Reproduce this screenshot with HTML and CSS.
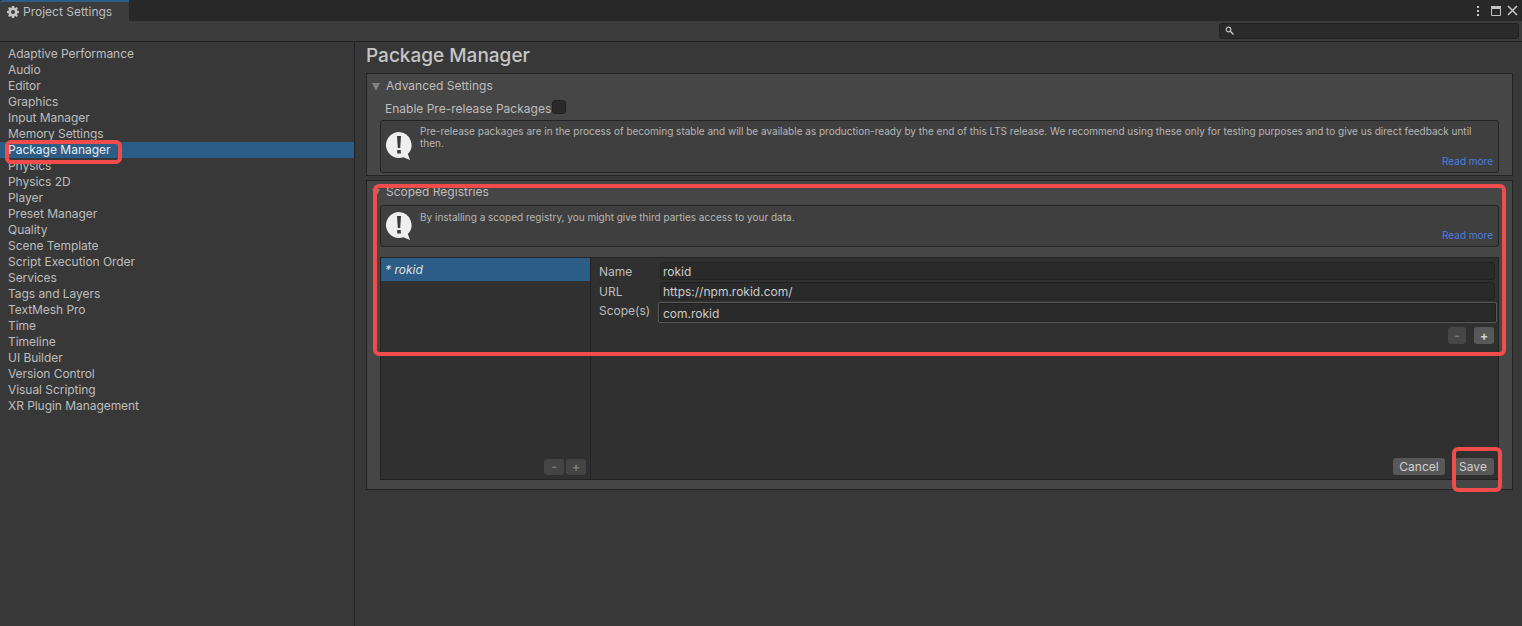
FILE: index.html
```html
<!DOCTYPE html>
<html lang="en">
<head>
<meta charset="utf-8">
<title>Project Settings</title>
<link rel="stylesheet" href="styles.css">
</head>
<body>
<div class="window">
  <header class="tabbar">
    <div class="tab">
      <svg class="gear" viewBox="0 0 12 12" width="12" height="12"><path fill="#c4c4c4" fill-rule="evenodd" d="M5 0h2l.3 1.6 1 .4L9.7 1.1l1.2 1.2L10 3.700l.4 1L12 5v2l-1.600.3-.4 1 .9 1.400-1.200 1.200-1.400-.9-1 .4L7 12H5l-.3-1.600-1-.4-1.400.9-1.200-1.200.9-1.400-.4-1L0 7V5l1.600-.3.4-1-.9-1.400L2.300 1.100l1.400.9 1-.4zM6 4a2 2 0 100 4 2 2 0 000-4z"/></svg>
      <span>Project Settings</span>
    </div>
    <div class="winctl">
      <svg class="kebab" viewBox="0 0 4 12" width="4" height="12"><path fill="#c4c4c4" d="M1 1h2v2H1zM1 5h2v2H1zM1 9h2v2H1z"/></svg>
      <svg viewBox="0 0 10 10" width="10" height="10"><path fill="none" stroke="#c4c4c4" d="M.5 2.500h9v7h-9z"/><path fill="#c4c4c4" d="M0 0h10v2.500H0z"/></svg>
      <svg viewBox="0 0 11 11" width="11" height="11"><path stroke="#c4c4c4" stroke-width="1.600" d="M1 1l9 9M10 1l-9 9"/></svg>
    </div>
  </header>
  <div class="toolbar">
    <div class="search">
      <svg viewBox="0 0 9 9" width="9" height="9"><circle cx="3.500" cy="3.500" r="2.300" fill="none" stroke="#c4c4c4" stroke-width="1.200"/><path stroke="#c4c4c4" stroke-width="1.400" d="M5.300 5.300L8.500 8.500"/></svg>
    </div>
  </div>
  <div class="content">
    <nav class="sidebar">
      <div class="nav-item">Adaptive Performance</div>
      <div class="nav-item">Audio</div>
      <div class="nav-item">Editor</div>
      <div class="nav-item">Graphics</div>
      <div class="nav-item">Input Manager</div>
      <div class="nav-item">Memory Settings</div>
      <div class="nav-item selected">Package Manager</div>
      <div class="nav-item">Physics</div>
      <div class="nav-item">Physics 2D</div>
      <div class="nav-item">Player</div>
      <div class="nav-item">Preset Manager</div>
      <div class="nav-item">Quality</div>
      <div class="nav-item">Scene Template</div>
      <div class="nav-item">Script Execution Order</div>
      <div class="nav-item">Services</div>
      <div class="nav-item">Tags and Layers</div>
      <div class="nav-item">TextMesh Pro</div>
      <div class="nav-item">Time</div>
      <div class="nav-item">Timeline</div>
      <div class="nav-item">UI Builder</div>
      <div class="nav-item">Version Control</div>
      <div class="nav-item">Visual Scripting</div>
      <div class="nav-item">XR Plugin Management</div>
    </nav>
    <main class="main">
      <h1 class="title">Package Manager</h1>
      <section class="panel panel-advanced">
        <div class="foldout"><i class="tri"></i><span>Advanced Settings</span></div>
        <div class="check-row"><span>Enable Pre-release Packages</span><i class="checkbox"></i></div>
        <div class="help help-tall">
          <svg class="warn" viewBox="0 0 28 30" width="28" height="30"><path fill="#efefef" d="M14 1a13 13 0 1 0 4.500 25.200L25 29l-2.200-6A13 13 0 0 0 14 1z"/><path fill="#3a3a3a" d="M12 5h4l-.8 12h-2.400zM12.200 19h3.600v3.600h-3.600z"/></svg>
          <p>Pre-release packages are in the process of becoming stable and will be available as production-ready by the end of this LTS release. We recommend using these only for testing purposes and to give us direct feedback until then.</p>
          <a class="more">Read more</a>
        </div>
      </section>
      <section class="panel panel-scoped">
        <div class="foldout foldout-scoped"><i class="tri"></i><span>Scoped Registries</span></div>
        <div class="help help-short">
          <svg class="warn" viewBox="0 0 28 30" width="28" height="30"><path fill="#efefef" d="M14 1a13 13 0 1 0 4.500 25.200L25 29l-2.200-6A13 13 0 0 0 14 1z"/><path fill="#3a3a3a" d="M12 5h4l-.8 12h-2.400zM12.200 19h3.600v3.600h-3.600z"/></svg>
          <p>By installing a scoped registry, you might give third parties access to your data.</p>
          <a class="more">Read more</a>
        </div>
        <div class="registry">
          <div class="reg-list">
            <div class="reg-item">* rokid</div>
            <div class="list-btns">
              <button class="btn mini dim">-</button>
              <button class="btn mini dim">+</button>
            </div>
          </div>
          <div class="reg-detail">
            <div class="field"><label>Name</label><div class="input">rokid</div></div>
            <div class="field"><label>URL</label><div class="input">https://npm.rokid.com/</div></div>
            <div class="field field-focus"><label>Scope(s)</label><div class="input focus">com.rokid</div></div>
            <div class="scope-btns">
              <button class="btn mini narrow dim">-</button>
              <button class="btn mini">+</button>
            </div>
            <div class="actions">
              <button class="btn action cancel">Cancel</button>
              <button class="btn action save">Save</button>
            </div>
          </div>
        </div>
      </section>
    </main>
  </div>
  <div class="mark mark-nav"></div>
  <div class="mark mark-reg"></div>
  <div class="mark mark-save"></div>
</div>
</body>
</html>
```
FILE: styles.css
```css
* { box-sizing: border-box; }
html, body { margin: 0; height: 100%; overflow: hidden; }
body { font-family: Inter, "Noto Sans", sans-serif; font-size: 12px; color: #bdbdbd; background: #383838; }
.window { position: relative; display: flex; flex-direction: column; width: 1522px; height: 626px; }

.tabbar { display: flex; justify-content: space-between; height: 21px; background: #282828; flex: none; }
.tab { display: flex; align-items: center; gap: 4px; width: 129px; padding-left: 7px; background: #3c3c3c; border-top: 2px solid #2c5d87; border-radius: 3px 0 0 0; }
.gear { flex: none; }
.winctl { display: flex; align-items: center; gap: 6px; padding: 0 4px 0 0; }
.kebab { margin-right: 5px; }

.toolbar { display: flex; justify-content: flex-end; align-items: center; height: 21px; padding: 0 3px 1px 0; background: #3c3c3c; border-bottom: 1px solid #232323; flex: none; }
.search { display: flex; align-items: center; width: 300px; height: 16px; padding-left: 5px; background: #2a2a2a; border: 1px solid #212121; border-radius: 3px; }

.content { display: flex; flex: 1; min-height: 0; }
.sidebar { width: 355px; padding-top: 4px; background: #383838; border-right: 1px solid #232323; flex: none; }
.nav-item { height: 16px; padding-left: 8px; line-height: 16px; letter-spacing: -0.05px; }
.nav-item.selected { background: #2c5d87; color: #ececec; letter-spacing: 0; }

.main { flex: 1; padding: 0 9px 0 11px; min-width: 0; }
.title { margin: 0; height: 31px; padding-top: 2px; font-size: 19px; line-height: 24px; font-weight: 500; color: #c6c6c6; }

.panel { background: #464646; border: 1px solid #232323; padding: 0 13px 0 13px; }
.panel-advanced { height: 103px; margin-bottom: 4px; }
.panel-scoped { height: 310px; }
.foldout { position: relative; display: flex; align-items: center; height: 23px; padding-left: 6px; font-size: 12px; }
.foldout-scoped { height: 24px; margin-top: -1px; }
.foldout-scoped span { margin-top: -2px; }
.tri { position: absolute; left: -8px; top: 9px; border-left: 4.500px solid transparent; border-right: 4.500px solid transparent; border-top: 8px solid #808080; }
.check-row { display: flex; align-items: center; height: 20px; padding: 2px 0 0 5px; font-size: 12px; }
.checkbox { width: 14px; height: 14px; margin: -2px 0 0 1px; background: #2a2a2a; border: 1px solid #212121; border-radius: 3px; }

.help { position: relative; background: #3f3f3f; border: 1px solid #232323; border-radius: 3px; padding: 5px 5px 0 39px; font-size: 10px; line-height: 12px; color: #b6b6b6; }
.help p { margin: 0; }
.help-tall { height: 53px; margin-top: 3px; padding-top: 4px; }
.help-short { height: 42px; margin-top: 1px; }
.warn { position: absolute; left: 4px; top: 10px; }
.help-short .warn { top: 5px; }
.more { position: absolute; right: 5px; bottom: 5px; color: #4c7ee0; }

.registry { display: flex; height: 223px; margin-top: 10px; background: #303030; border: 1px solid #232323; }
.reg-list { display: flex; flex-direction: column; width: 210px; border-right: 1px solid #232323; padding-bottom: 4px; flex: none; }
.reg-item { height: 23px; padding-left: 4px; line-height: 24px; background: #2c5d87; color: #e0e0e0; font-style: italic; font-size: 12px; }
.list-btns { display: flex; justify-content: flex-end; gap: 2px; margin-top: auto; padding-right: 4px; }
.reg-detail { display: flex; flex-direction: column; flex: 1; padding: 4px 3px 4px 8px; min-width: 0; }
.field { display: flex; align-items: center; height: 18px; margin-bottom: 2px; }
.field label { width: 61px; flex: none; }
.field-focus { height: 21px; margin: 0 -2px 0 0; align-items: flex-start; }
.field-focus label { width: 59px; padding-top: 1px; }
.input { flex: 1; height: 18px; padding-left: 2px; line-height: 17px; background: #2a2a2a; border: 1px solid #212121; border-radius: 3px; color: #cccccc; }
.input.focus { height: 21px; line-height: 21px; padding-left: 4px; border: 1px solid #585858; border-radius: 2px; box-shadow: inset 0 0 0 1px #212121; background: #2a2a2a; }
.scope-btns { display: flex; justify-content: flex-end; gap: 8px; margin-top: 4px; padding-right: 1px; }
.actions { display: flex; justify-content: flex-end; gap: 7px; margin-top: auto; padding-right: 1px; }

.btn { font: inherit; color: #d0d0d0; background: #585858; border: 0; border-radius: 3px; padding: 0; height: 17px; line-height: 16px; }
.mini { width: 20px; font-weight: 700; font-size: 12px; }
.narrow { width: 18px; }
.dim { background: #464646; color: #7a7a7a; }
.reg-list .btn { height: 16px; background: #444; }
.action { font-size: 12px; }
.cancel { width: 52px; }
.save { width: 42px; }

.mark { position: absolute; border: 4px solid #f04c4c; border-radius: 6px; pointer-events: none; }
.mark-nav { left: 5px; top: 140px; width: 117px; height: 24px; }
.mark-reg { left: 373px; top: 184px; width: 1133px; height: 172px; }
.mark-save { left: 1452px; top: 447px; width: 50px; height: 45px; }
```
